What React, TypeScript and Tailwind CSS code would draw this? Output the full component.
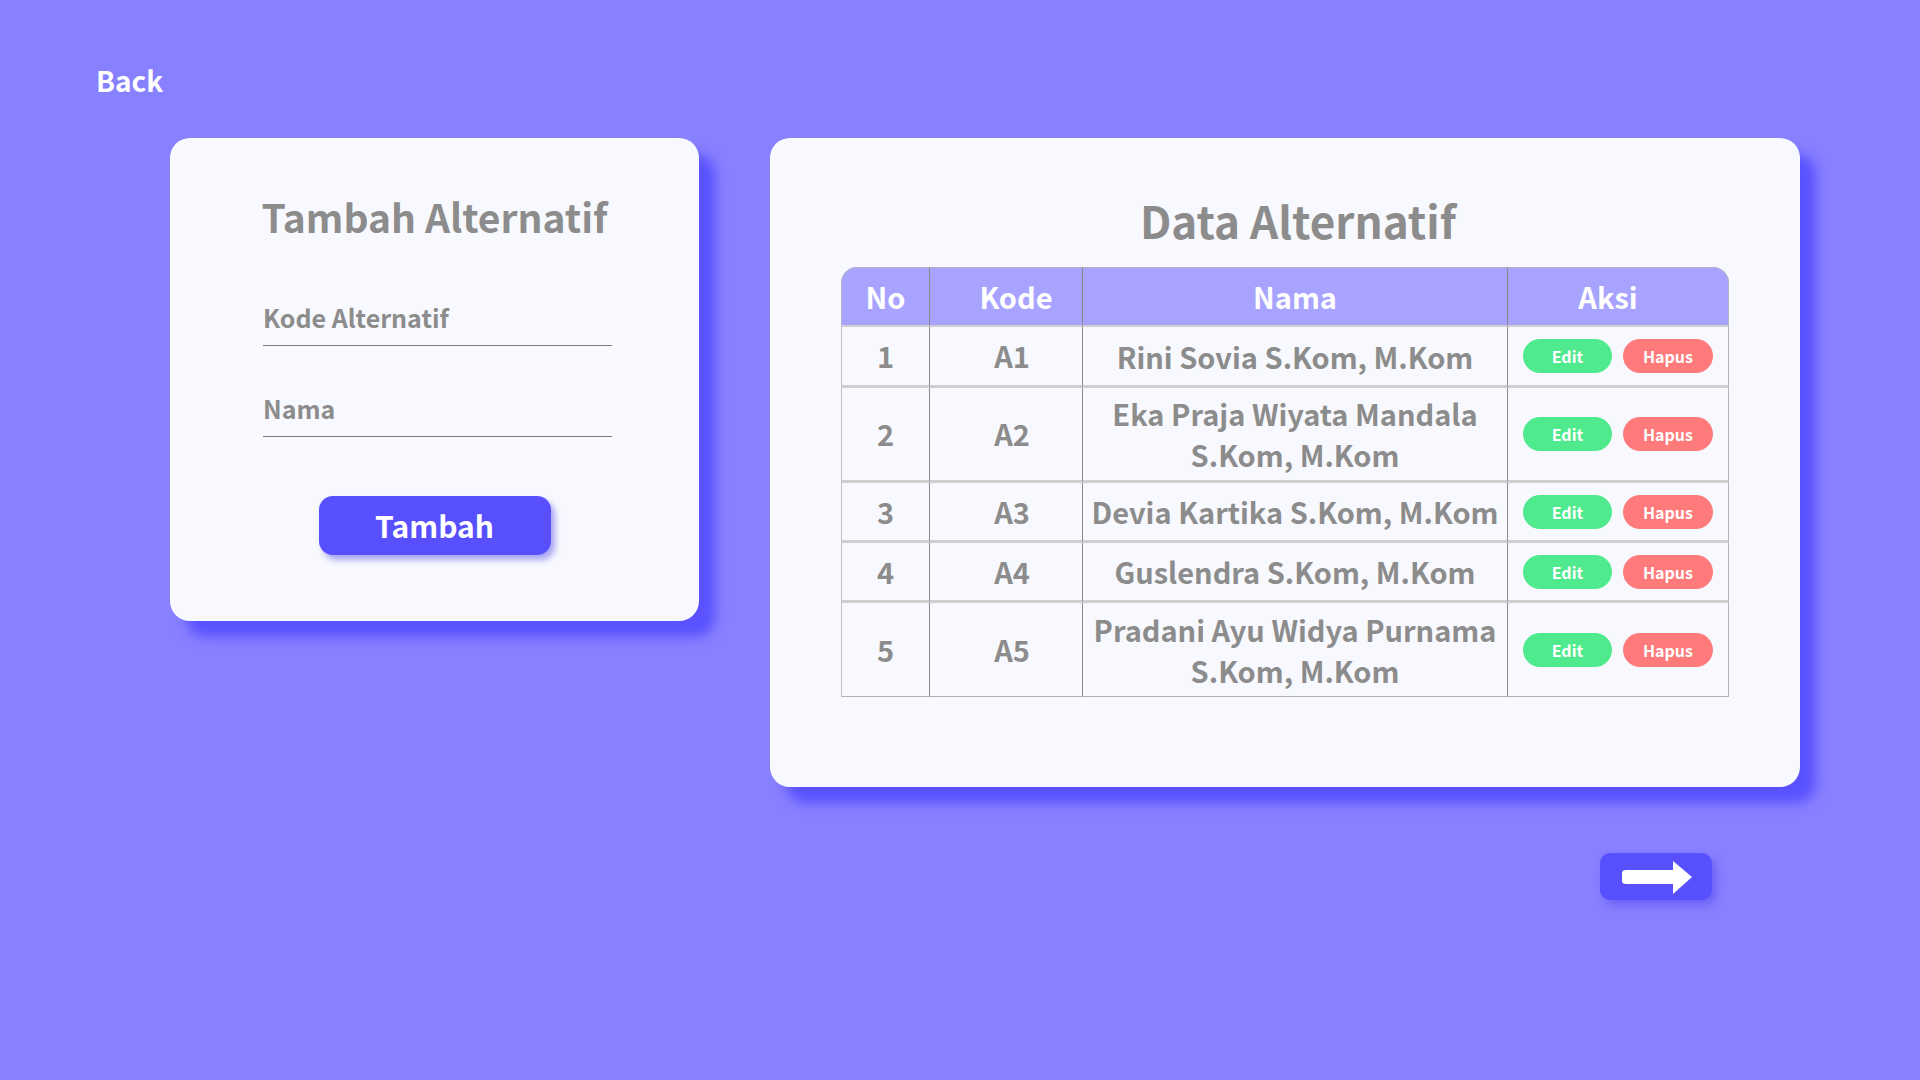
const rows = [
  { no: 1, kode: "A1", nama: ["Rini Sovia S.Kom, M.Kom"], h: "h-[61px]" },
  { no: 2, kode: "A2", nama: ["Eka Praja Wiyata Mandala", "S.Kom, M.Kom"], h: "h-[95px]" },
  { no: 3, kode: "A3", nama: ["Devia Kartika S.Kom, M.Kom"], h: "h-[60px]" },
  { no: 4, kode: "A4", nama: ["Guslendra S.Kom, M.Kom"], h: "h-[60px]" },
  { no: 5, kode: "A5", nama: ["Pradani Ayu Widya Purnama", "S.Kom, M.Kom"], h: "h-[94px]" },
];

function Field({ label }: { label: string }) {
  return (
    <div className="w-[349px] border-b-[1.5px] border-[#7a7a7a] pb-[12px]">
      <span className="text-[25px] font-bold text-[#8c8c8c] leading-none">{label}</span>
    </div>
  );
}

export default function App() {
  return (
    <main
      className="min-h-screen w-full bg-[#8780ff] px-[96px] pt-[60px] pb-[179px]"
      style={{ fontFamily: '"Noto Sans CJK KR", "Noto Sans", sans-serif' }}
    >
      <a className="block w-fit text-[28px] font-bold text-white leading-[40px]">Back</a>

      <div className="mt-[38px] ml-[74px] flex items-start gap-[71px]">
        {/* Form card */}
        <section className="w-[529px] h-[483px] rounded-[20px] bg-[#f8f9fe] shadow-[16px_16px_12px_#5a52ff] flex flex-col items-center pt-[51px]">
          <h2 className="text-[39px] font-bold text-[#8c8c8c] leading-[54px]">Tambah Alternatif</h2>
          <div className="mt-[62px] ml-[6px] flex flex-col gap-[50px]">
            <Field label="Kode Alternatif" />
            <Field label="Nama" />
          </div>
          <button className="mt-[59px] w-[232px] h-[59px] rounded-[14px] bg-[#5850ff] text-white text-[30px] font-bold shadow-[4px_5px_6px_rgba(70,60,230,0.45)]">
            Tambah
          </button>
        </section>

        {/* Table card */}
        <section className="w-[1030px] h-[649px] rounded-[20px] bg-[#f8f9fe] shadow-[16px_16px_12px_#5a52ff] flex flex-col items-center pt-[52px]">
          <h2 className="pl-[26px] text-[44px] font-bold text-[#8c8c8c] leading-[60px]">Data Alternatif</h2>
          <table className="mt-[17px] w-[888px] border-separate border-spacing-0 text-[29px] font-bold text-center">
            <thead>
              <tr className="bg-[#a7a3ff] text-white h-[60px]">
                <th className="w-[88px] rounded-tl-[16px] border-l border-t border-b-2 border-[#b4b4c8] border-b-[#d0d0d0]">No</th>
                <th className="w-[153px] pl-[20px] border-t border-l border-b-2 border-[#8a8a8a] border-t-[#b4b4c8] border-b-[#d0d0d0]">Kode</th>
                <th className="w-[425px] border-t border-l border-b-2 border-[#8a8a8a] border-t-[#b4b4c8] border-b-[#d0d0d0]">Nama</th>
                <th className="pr-[20px] rounded-tr-[16px] border-t border-l border-r border-b-2 border-[#8a8a8a] border-t-[#b4b4c8] border-r-[#b4b4c8] border-b-[#d0d0d0]">Aksi</th>
              </tr>
            </thead>
            <tbody className="text-[#8c8c8c]">
              {rows.map((r, i) => {
                const last = i === rows.length - 1;
                const b = last ? "border-b border-b-[#b0b0b0]" : "border-b-[3px] border-b-[#cfcfcf]";
                return (
                  <tr key={r.no} className={r.h}>
                    <td className={`border-l border-l-[#c4c4c4] ${b}`}>{r.no}</td>
                    <td className={`pl-[12px] border-l border-l-[#8a8a8a] ${b}`}>{r.kode}</td>
                    <td className={`border-l border-l-[#8a8a8a] ${b} leading-[41px] whitespace-nowrap`}>
                      {r.nama.map((n) => (
                        <div key={n}>{n}</div>
                      ))}
                    </td>
                    <td className={`border-l border-l-[#8a8a8a] border-r border-r-[#b4b4b4] ${b}`}>
                      <div className="flex justify-center gap-[11px]">
                        <button className="w-[89px] h-[34px] rounded-full bg-[#50ea8e] text-white text-[16px] font-bold">Edit</button>
                        <button className="w-[90px] h-[34px] rounded-full bg-[#ff7a7a] text-white text-[16px] font-bold">Hapus</button>
                      </div>
                    </td>
                  </tr>
                );
              })}
            </tbody>
          </table>
        </section>
      </div>

      <div className="mt-[66px] flex justify-end pr-[112px]">
        <button className="w-[112px] h-[47px] rounded-[10px] bg-[#5850ff] shadow-[4px_5px_8px_rgba(70,60,230,0.45)] flex items-center justify-center">
          <svg width="112" height="47" viewBox="0 0 112 47" fill="#fff">
            <path d="M26 17 H73 V8 L92 24 L73 41 V31 H26 Q22 31 22 28 V20 Q22 17 26 17 Z" />
          </svg>
        </button>
      </div>
    </main>
  );
}
